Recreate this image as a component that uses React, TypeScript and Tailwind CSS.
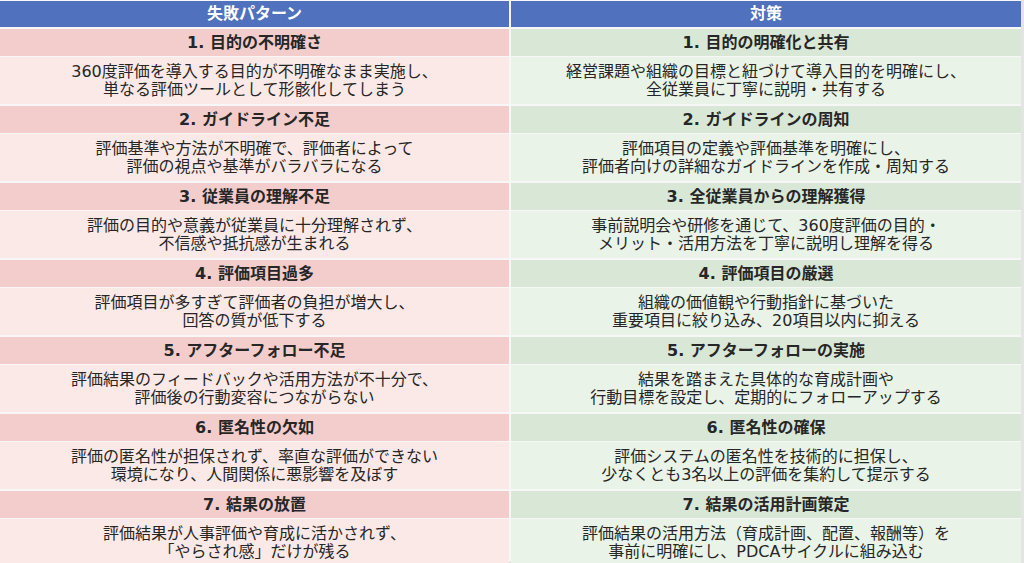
const rows = [
  {
    fail: "1. 目的の不明確さ",
    failText: ["360度評価を導入する目的が不明確なまま実施し、", "単なる評価ツールとして形骸化してしまう"],
    fix: "1. 目的の明確化と共有",
    fixText: ["経営課題や組織の目標と紐づけて導入目的を明確にし、", "全従業員に丁寧に説明・共有する"],
  },
  {
    fail: "2. ガイドライン不足",
    failText: ["評価基準や方法が不明確で、評価者によって", "評価の視点や基準がバラバラになる"],
    fix: "2. ガイドラインの周知",
    fixText: ["評価項目の定義や評価基準を明確にし、", "評価者向けの詳細なガイドラインを作成・周知する"],
  },
  {
    fail: "3. 従業員の理解不足",
    failText: ["評価の目的や意義が従業員に十分理解されず、", "不信感や抵抗感が生まれる"],
    fix: "3. 全従業員からの理解獲得",
    fixText: ["事前説明会や研修を通じて、360度評価の目的・", "メリット・活用方法を丁寧に説明し理解を得る"],
  },
  {
    fail: "4. 評価項目過多",
    failText: ["評価項目が多すぎて評価者の負担が増大し、", "回答の質が低下する"],
    fix: "4. 評価項目の厳選",
    fixText: ["組織の価値観や行動指針に基づいた", "重要項目に絞り込み、20項目以内に抑える"],
  },
  {
    fail: "5. アフターフォロー不足",
    failText: ["評価結果のフィードバックや活用方法が不十分で、", "評価後の行動変容につながらない"],
    fix: "5. アフターフォローの実施",
    fixText: ["結果を踏まえた具体的な育成計画や", "行動目標を設定し、定期的にフォローアップする"],
  },
  {
    fail: "6. 匿名性の欠如",
    failText: ["評価の匿名性が担保されず、率直な評価ができない", "環境になり、人間関係に悪影響を及ぼす"],
    fix: "6. 匿名性の確保",
    fixText: ["評価システムの匿名性を技術的に担保し、", "少なくとも3名以上の評価を集約して提示する"],
  },
  {
    fail: "7. 結果の放置",
    failText: ["評価結果が人事評価や育成に活かされず、", "「やらされ感」だけが残る"],
    fix: "7. 結果の活用計画策定",
    fixText: ["評価結果の活用方法（育成計画、配置、報酬等）を", "事前に明確にし、PDCAサイクルに組み込む"],
  },
]

function Lines({ lines }: { lines: string[] }) {
  return (
    <>
      {lines.map((l, i) => (
        <span key={i} className="block">
          {l}
        </span>
      ))}
    </>
  )
}

export default function App() {
  return (
    <div
      className="w-[1024px] h-[563px] overflow-hidden bg-[#e4e4e4] text-[#262626]"
      style={{ fontFamily: '"DejaVu Sans", "Noto Sans CJK JP", sans-serif' }}
    >
      <div className="w-[1021px] h-[561px] bg-[#f7f7f7] pt-px">
        <div className="grid grid-cols-[509px_510px] gap-x-[2px] h-[26px] text-white font-bold text-[16px]">
          <div className="bg-[#4f71be] flex items-center justify-center">失敗パターン</div>
          <div className="bg-[#4f71be] flex items-center justify-center">対策</div>
        </div>
        <div className="mt-[2px] grid grid-cols-[509px_510px] gap-x-[2px] gap-y-px">
          {rows.map((r) => (
            <div key={r.fail} className="contents">
              <div className="h-[27px] bg-[#f2cdcc] flex items-center justify-center font-bold text-[16px]">
                {r.fail}
              </div>
              <div className="h-[27px] bg-[#d9e7d6] flex items-center justify-center font-bold text-[16px]">
                {r.fix}
              </div>
              <div className="h-[47px] mb-px bg-[#fbe9e7] flex flex-col items-center justify-center text-center text-[16px] leading-[18px]">
                <Lines lines={r.failText} />
              </div>
              <div className="h-[47px] mb-px bg-[#e9f3e7] flex flex-col items-center justify-center text-center text-[16px] leading-[18px]">
                <Lines lines={r.fixText} />
              </div>
            </div>
          ))}
        </div>
      </div>
    </div>
  )
}
